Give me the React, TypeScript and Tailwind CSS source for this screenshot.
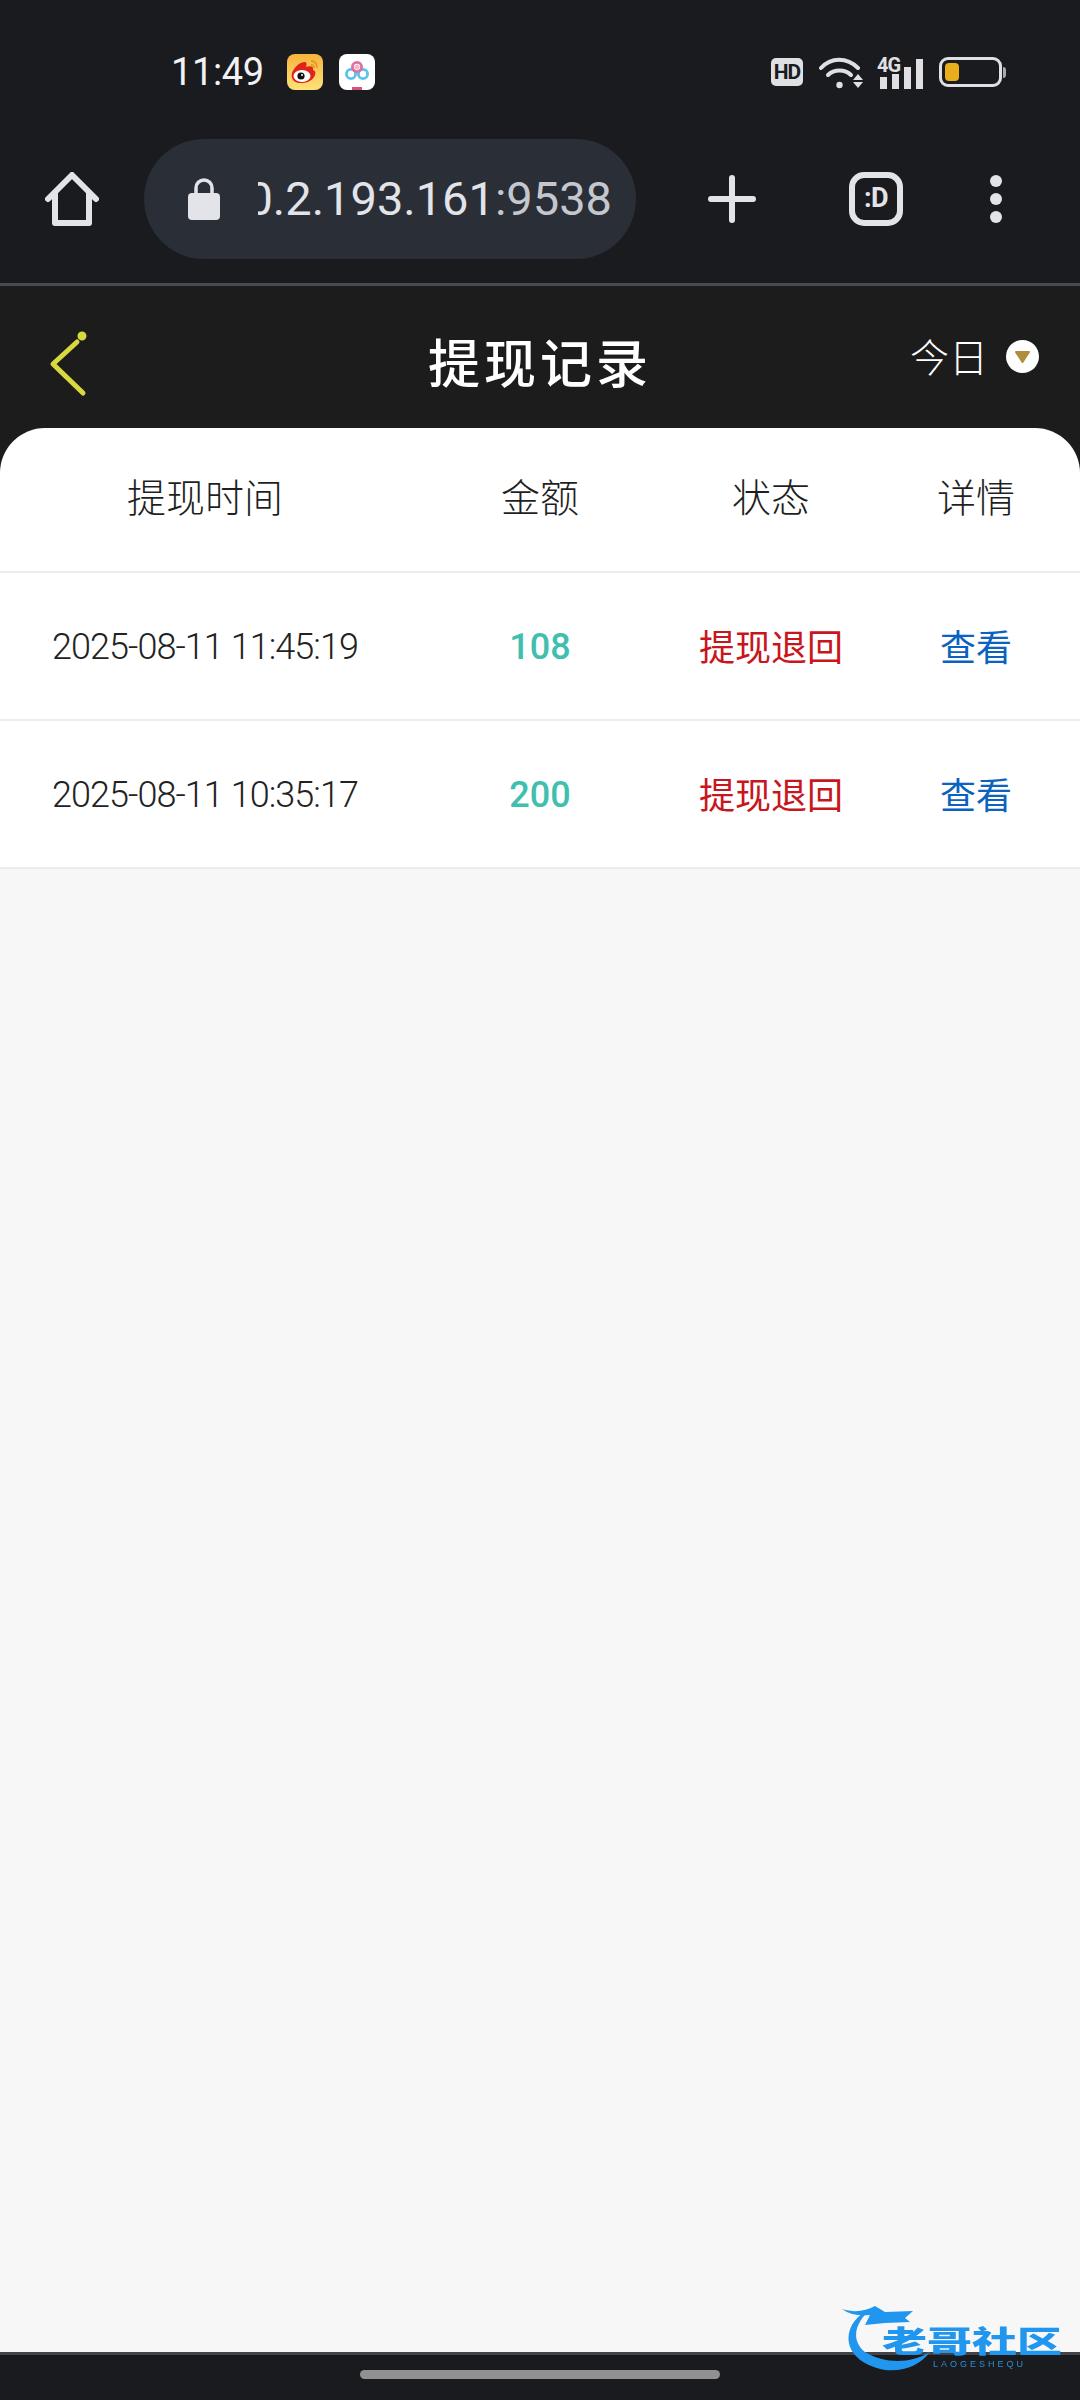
import React from "react";

const cjk = "font-['Noto_Sans_CJK_SC','Noto_Sans',sans-serif]";

const records = [
    { time: "2025-08-11 11:45:19", amount: "108" },
    { time: "2025-08-11 10:35:17", amount: "200" },
];

function WeiboIcon() {
    return (
        <svg width="36" height="36" viewBox="0 0 36 36">
            <defs>
                <linearGradient id="wb" x1="0" y1="0" x2="0" y2="1">
                    <stop offset="0" stopColor="#f9b43c" />
                    <stop offset="1" stopColor="#fde27a" />
                </linearGradient>
            </defs>
            <rect width="36" height="36" rx="8" fill="url(#wb)" />
            <path d="M5 24C3 18 10 9 17 8c3 0 3 2 2 5 5-2 8 0 7 3 3 1 3 4 1 7-3 5-9 6-13 6-5 0-8-2-9-5Z" fill="#e2231a" />
            <ellipse cx="15" cy="22" rx="8.500" ry="6" fill="#fff" />
            <circle cx="14" cy="22" r="3.600" fill="#111" />
            <circle cx="15" cy="21" r="1" fill="#fff" />
            <path d="M24 7c4 0 6 3 6 7M24 11c2 0 3 1 3 3" stroke="#e79a22" strokeWidth="1.800" fill="none" />
        </svg>
    );
}

function CloudIcon() {
    return (
        <svg width="36" height="36" viewBox="0 0 36 36">
            <rect width="36" height="36" rx="8" fill="#fff" />
            <circle cx="12" cy="20" r="4.600" fill="none" stroke="#5cc3e8" strokeWidth="2.800" />
            <circle cx="24" cy="20" r="4.600" fill="none" stroke="#5cc3e8" strokeWidth="2.800" />
            <circle cx="18" cy="13" r="4.600" fill="none" stroke="#e0709f" strokeWidth="2.800" />
            <circle cx="18" cy="13" r="2.600" fill="#f6b5cf" />
            <rect x="13" y="33" width="10" height="3" fill="#d9527c" />
        </svg>
    );
}

function StatusBar() {
    return (
        <div className="h-[120px] pt-6 flex items-center text-white">
            <span className="ml-[171px] w-[116px] text-[38px] leading-none font-['Roboto',sans-serif] text-[#f2f2f4] tracking-[-0.4px]">11:49</span>
            <WeiboIcon />
            <div className="ml-4">
                <CloudIcon />
            </div>
            <div className="ml-auto mr-[74px] flex items-center">
                <div className="w-8 h-7 rounded-[5px] bg-[#e0e0e3] flex items-center justify-center text-[#1a1b1f] text-[21px] leading-none font-bold font-['Roboto',sans-serif] tracking-tighter">HD</div>
                <svg className="ml-4" width="44" height="33" viewBox="0 0 44 33" fill="none">
                    <path d="M2 12C12 1 28 1 39 12" stroke="#e0e0e3" strokeWidth="4" strokeLinecap="round" />
                    <path d="M9 19c6-6 17-6 23 0" stroke="#e0e0e3" strokeWidth="4" strokeLinecap="round" />
                    <circle cx="20.500" cy="29" r="3.200" fill="#e0e0e3" />
                    <path d="M39 18l5 6H34ZM34 26h10l-5 6Z" fill="#e0e0e3" />
                </svg>
                <svg className="ml-[14px]" width="46" height="33" viewBox="0 0 46 33">
                    <text x="0" y="16" fontSize="20" fontWeight="700" letterSpacing="-1" fontFamily="Roboto, sans-serif" fill="#e0e0e3">4G</text>
                    <rect x="3" y="21" width="7" height="12" fill="#e0e0e3" />
                    <rect x="15" y="18" width="7" height="15" fill="#e0e0e3" />
                    <rect x="27" y="11" width="7" height="22" fill="#e0e0e3" />
                    <rect x="39" y="3" width="7" height="30" fill="#e0e0e3" />
                </svg>
                <div className="ml-4 w-[63px] h-[30px] rounded-[9px] border-[3px] border-[#e0e0e3] p-[3px]">
                    <div className="w-[14px] h-full rounded-[4px] bg-[#e8ae1c]" />
                </div>
                <div className="ml-[1px] w-[3px] h-[11px] rounded-r bg-[#a9aaae]" />
            </div>
        </div>
    );
}

function Toolbar() {
    return (
        <div className="h-[166px] pb-[6px] flex items-center border-b-[3px] border-[#4a4b50] text-[#e3e4e9]">
            <svg className="ml-[45px]" width="54" height="54" viewBox="0 0 54 54" fill="none" stroke="#e3e4e9" strokeWidth="6" strokeLinecap="round" strokeLinejoin="round">
                <path d="M3 27 27 3l24 24" />
                <path d="M10 21v30h34V21" />
            </svg>
            <div className="ml-[45px] w-[492px] h-[120px] rounded-full bg-[#2a2e36] flex items-center">
                <svg className="ml-[44px]" width="32" height="42" viewBox="0 0 32 42">
                    <path d="M8 17V10a8 8 0 0 1 16 0v7" fill="none" stroke="#e3e4e9" strokeWidth="3.500" />
                    <rect y="15" width="32" height="27" rx="4" fill="#e3e4e9" />
                </svg>
                <div className="ml-[38px] w-[354px] overflow-hidden flex justify-end">
                    <span className="shrink-0 text-[47px] leading-none whitespace-nowrap font-['Roboto',sans-serif]">
                        10.2.193.161<span className="text-[#c5c7ce]">:9538</span>
                    </span>
                </div>
            </div>
            <svg className="ml-[72px]" width="48" height="48" viewBox="0 0 48 48" stroke="#e3e4e9" strokeWidth="6" strokeLinecap="round">
                <path d="M3 24h42M24 3v42" />
            </svg>
            <div className="ml-[93px] w-[54px] h-[54px] rounded-[15px] border-[6px] border-[#e3e4e9] flex items-center justify-center text-[27px] leading-none font-bold tracking-tight font-['Roboto',sans-serif]">
                :D
            </div>
            <div className="ml-[87px] flex flex-col gap-[6px]">
                <div className="w-3 h-3 rounded-full bg-[#e3e4e9]" />
                <div className="w-3 h-3 rounded-full bg-[#e3e4e9]" />
                <div className="w-3 h-3 rounded-full bg-[#e3e4e9]" />
            </div>
        </div>
    );
}

function PageHeader() {
    return (
        <div className={`h-[187px] pb-[45px] bg-[#1c1c1c] grid grid-cols-[1fr_auto_1fr] items-center text-white ${cjk}`}>
            <svg className="ml-[49px] mt-[14px]" width="40" height="66" viewBox="0 0 40 66" fill="none" stroke="#d9d93f" strokeWidth="5" strokeLinecap="round" strokeLinejoin="round">
                <path d="M28 11 4 33l30 29" />
                <circle cx="33" cy="5" r="2" fill="#d9d93f" />
            </svg>
            <h1 className="mt-[8px] text-[52px] leading-none font-medium tracking-[4px]">提现记录</h1>
            <div className="justify-self-end mr-[41px] flex items-center gap-[18px]">
                <span className="-mt-[4px] text-[39px] leading-none font-light">今日</span>
                <svg className="-mt-[2px]" width="33" height="33" viewBox="0 0 33 33">
                    <circle cx="16.500" cy="16.500" r="16.500" fill="#fff" />
                    <path d="M10 12h13l-6.500 10Z" fill="#b08d3a" stroke="#b08d3a" strokeWidth="2" strokeLinejoin="round" />
                </svg>
            </div>
        </div>
    );
}

function Table() {
    const cols = "grid grid-cols-[410px_260px_202px_208px] items-center text-center";
    return (
        <div className={`-mt-[45px] bg-white rounded-t-[45px] ${cjk}`}>
            <div className={`${cols} h-[145px] pb-[8px] border-b-2 border-[#ececec] text-[39px] leading-none font-light text-[#1f1f1f]`}>
                <div>提现时间</div>
                <div>金额</div>
                <div>状态</div>
                <div>详情</div>
            </div>
            {records.map((r) => (
                <div key={r.time} className={`${cols} h-[148px] border-b-2 border-[#ececec] text-[36px] leading-none`}>
                    <div className="mt-[2px] font-['Roboto',sans-serif] font-light text-[#222] tracking-[-0.95px]">{r.time}</div>
                    <div className="mt-[2px] font-['Roboto',sans-serif] font-medium text-[#41bfae]">{r.amount}</div>
                    <div className="-mt-[3px] text-[#c8161d]">提现退回</div>
                    <div className="-mt-[3px] text-[#0b62bf]">查看</div>
                </div>
            ))}
        </div>
    );
}

function Watermark() {
    return (
        <div className="absolute right-0 bottom-0 w-[300px] h-[120px] blur-[0.5px]">
            <svg className="absolute inset-0" width="300" height="120" viewBox="0 0 300 120" fill="#2196ef">
                <path d="M92 28C62 40 55 80 105 90c20 2 35-5 45-18-20 12-45 12-65 0-15-12-10-30 7-44Z" />
                <path d="M62 29c13 4 23 2 33-3l10 6 28-1-8 7 5 4-25 1-20 2 5-10c-10 1-20 0-28-6Z" />
            </svg>
            <span className={`absolute left-[102px] top-[44px] text-[30px] leading-none font-black text-[#2196ef] origin-left scale-x-150 whitespace-nowrap ${cjk}`}>
                老哥社区
            </span>
            <span className="absolute left-[153px] top-[80px] text-[9px] leading-none tracking-[3px] text-[#2b8fd8] font-['Liberation_Sans',sans-serif]">
                LAOGESHEQU
            </span>
        </div>
    );
}

export default function App() {
    return (
        <div className="relative w-[1080px] h-[2400px] flex flex-col bg-[#1a1b1f] overflow-hidden">
            <StatusBar />
            <Toolbar />
            <PageHeader />
            <Table />
            <div className="flex-1 bg-[#f7f7f7]" />
            <div className="h-[48px] pt-[15px] border-t-[3px] border-[#434449] flex justify-center">
                <div className="w-[360px] h-[9px] rounded-full bg-[#919191]" />
            </div>
            <Watermark />
        </div>
    );
}
